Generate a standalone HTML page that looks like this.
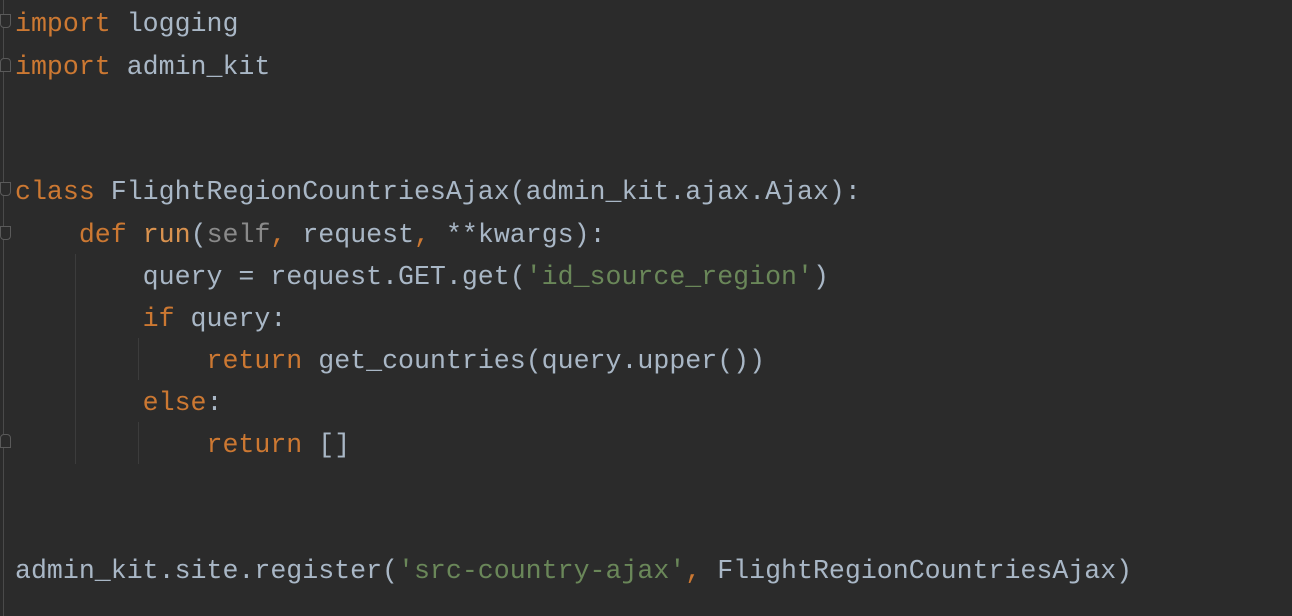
<!DOCTYPE html>
<html><head><style>
html,body{margin:0;padding:0;background:#2b2b2b;width:1292px;height:616px;overflow:hidden}
.code{position:absolute;left:15px;top:2px;font-family:"Liberation Mono",monospace;font-size:26.6px;color:#a9b7c6;white-space:pre}
.l{position:absolute;left:0;height:42px;line-height:42px}
.k{color:#cc7832}.s{color:#6a8759}.f{color:#d9924f}.self{color:#8a8a8a}
.g{position:absolute;left:3px;top:0;width:1px;height:616px;background:#4a4a4a}
.ig{position:absolute;width:1px;background:#3c3c3c}
.fold{position:absolute;left:0;width:9px;height:12px;border:1px solid #5a5a5a;border-radius:0 0 4px 4px;background:#2b2b2b}
.fold.up{border-radius:4px 4px 0 0}
</style></head><body>
<div class="g"></div>
<div class="fold" style="top:14px"></div>
<div class="fold up" style="top:58px"></div>
<div class="fold" style="top:182px"></div>
<div class="fold" style="top:226px"></div>
<div class="fold up" style="top:434px"></div>
<div class="ig" style="left:75px;top:254px;height:210px"></div>
<div class="ig" style="left:138px;top:338px;height:42px"></div>
<div class="ig" style="left:138px;top:422px;height:42px"></div>
<div class="code">
<div class="l" style="top:1px"><span class="k">import</span> logging</div>
<div class="l" style="top:44px"><span class="k">import</span> admin_kit</div>
<div class="l" style="top:169px"><span class="k">class</span> FlightRegionCountriesAjax(admin_kit.ajax.Ajax):</div>
<div class="l" style="top:212px">    <span class="k">def</span> <span class="f">run</span>(<span class="self">self</span><span class="k">,</span> request<span class="k">,</span> **kwargs):</div>
<div class="l" style="top:254px">        query = request.GET.get(<span class="s">'id_source_region'</span>)</div>
<div class="l" style="top:296px">        <span class="k">if</span> query:</div>
<div class="l" style="top:338px">            <span class="k">return</span> get_countries(query.upper())</div>
<div class="l" style="top:380px">        <span class="k">else</span>:</div>
<div class="l" style="top:422px">            <span class="k">return</span> []</div>
<div class="l" style="top:548px">admin_kit.site.register(<span class="s">'src-country-ajax'</span><span class="k">,</span> FlightRegionCountriesAjax)</div>
</div>
</body></html>
